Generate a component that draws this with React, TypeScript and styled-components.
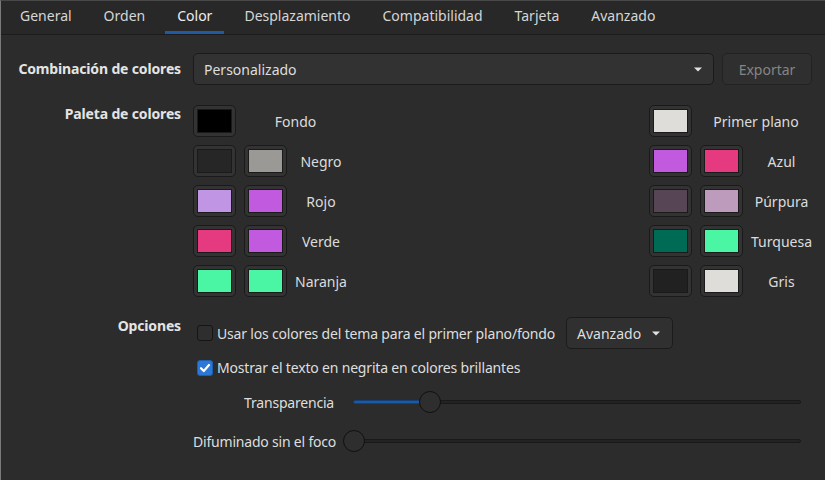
import React from "react";
import styled, { createGlobalStyle } from "styled-components";

const GlobalStyle = createGlobalStyle`
  html, body {
    margin: 0;
    padding: 0;
    background: #2c2c2c;
  }
  * {
    box-sizing: border-box;
  }
`;

const tabs = [
  "General",
  "Orden",
  "Color",
  "Desplazamiento",
  "Compatibilidad",
  "Tarjeta",
  "Avanzado",
];

interface IPaletteRow {
  name: string;
  colors: string[];
}

const leftPalette: IPaletteRow[] = [
  { name: "Fondo", colors: ["#000000"] },
  { name: "Negro", colors: ["#262626", "#9a9996"] },
  { name: "Rojo", colors: ["#c095e4", "#c25ae0"] },
  { name: "Verde", colors: ["#e53a80", "#c25ae0"] },
  { name: "Naranja", colors: ["#4af5a3", "#4af5a3"] },
];

const rightPalette: IPaletteRow[] = [
  { name: "Primer plano", colors: ["#deddda"] },
  { name: "Azul", colors: ["#c25ae0", "#e53a80"] },
  { name: "Púrpura", colors: ["#574556", "#bd9bbd"] },
  { name: "Turquesa", colors: ["#006b55", "#4af5a3"] },
  { name: "Gris", colors: ["#212121", "#deddda"] },
];

const ArrowDown = () => (
  <svg width="8" height="5" viewBox="0 0 8 5">
    <path d="M0 0.5 L8 0.5 L4 4.5 Z" fill="#e2e2e2" />
  </svg>
);

const CheckMark = () => (
  <svg width="12" height="12" viewBox="0 0 12 12">
    <path
      d="M2 6.2 L4.8 9 L10 3"
      fill="none"
      stroke="#ffffff"
      strokeWidth="2.2"
      strokeLinecap="round"
      strokeLinejoin="round"
    />
  </svg>
);

const Palette = ({ rows }: { rows: IPaletteRow[] }) => (
  <PaletteGroup>
    {rows.map((row) => (
      <React.Fragment key={row.name}>
        {row.colors.map((color, index) => (
          <SwatchButton key={index}>
            <SwatchColor style={{ background: color }} />
          </SwatchButton>
        ))}
        <SwatchName $wide={row.colors.length === 1}>{row.name}</SwatchName>
      </React.Fragment>
    ))}
  </PaletteGroup>
);

const Slider = ({ value }: { value: number }) => (
  <SliderBox>
    <Track>
      <TrackFill style={{ width: `${value * 100}%` }} />
      <Thumb style={{ left: `${value * 100}%` }} />
    </Track>
  </SliderBox>
);

const App = () => {
  return (
    <>
      <GlobalStyle />
      <Window>
        <TabBar>
          {tabs.map((tab) => (
            <Tab key={tab} $active={tab === "Color"}>
              {tab}
            </Tab>
          ))}
        </TabBar>
        <FormGrid>
          <RowLabel $center>Combinación de colores</RowLabel>
          <SchemeRow>
            <Combo>
              <span>Personalizado</span>
              <ArrowDown />
            </Combo>
            <Button disabled>Exportar</Button>
          </SchemeRow>

          <RowLabel>Paleta de colores</RowLabel>
          <PaletteRow>
            <Palette rows={leftPalette} />
            <Palette rows={rightPalette} />
          </PaletteRow>

          <RowLabel>Opciones</RowLabel>
          <Options>
            <OptionLine>
              <CheckItem>
                <CheckBox $checked={false} />
                Usar los colores del tema para el primer plano/fondo
              </CheckItem>
              <MenuButton>
                Avanzado
                <ArrowDown />
              </MenuButton>
            </OptionLine>
            <OptionLine>
              <CheckItem>
                <CheckBox $checked>
                  <CheckMark />
                </CheckBox>
                Mostrar el texto en negrita en colores brillantes
              </CheckItem>
            </OptionLine>
            <SliderGrid>
              <SliderLabel>Transparencia</SliderLabel>
              <Slider value={0.17} />
              <SliderLabel>Difuminado sin el foco</SliderLabel>
              <Slider value={0} />
            </SliderGrid>
          </Options>
        </FormGrid>
      </Window>
    </>
  );
};

const Window = styled.div`
  width: 825px;
  height: 480px;
  background: #2c2c2c;
  border-left: 1px solid #7a7a7a;
  border-top: 1px solid #484848;
  color: #dedede;
  font-family: "Noto Sans", "DejaVu Sans", sans-serif;
  font-size: 14px;
  overflow: hidden;
`;

const TabBar = styled.div`
  display: flex;
  gap: 8px;
  height: 34px;
  padding-left: 7px;
  background: #282828;
  border-bottom: 1px solid #1c1c1c;
`;

const Tab = styled.div<{ $active: boolean }>`
  display: flex;
  align-items: center;
  padding: 0 12px 1px;
  height: 100%;
  color: ${(p) => (p.$active ? "#eeeeee" : "#d6d6d6")};
  border-bottom: 3px solid ${(p) => (p.$active ? "#1f5aa2" : "transparent")};
`;

const FormGrid = styled.div`
  display: grid;
  grid-template-columns: 164px 1fr;
  column-gap: 12px;
  row-gap: 20px;
  padding: 18px 13px 0 16px;
`;

const RowLabel = styled.div<{ $center?: boolean }>`
  align-self: ${(p) => (p.$center ? "center" : "start")};
  text-align: right;
  white-space: nowrap;
  font-weight: 700;
  letter-spacing: -0.15px;
  line-height: 18px;
  color: #e4e4e4;
  direction: rtl;
  unicode-bidi: plaintext;
`;

const SchemeRow = styled.div`
  display: flex;
  gap: 8px;
`;

const Combo = styled.div`
  flex: 1;
  display: flex;
  align-items: center;
  justify-content: space-between;
  height: 32px;
  padding: 0 11px 0 10px;
  background: #323232;
  border: 1px solid #1b1b1b;
  border-radius: 5px;
`;

const Button = styled.button`
  width: 90px;
  height: 32px;
  font-family: inherit;
  font-size: 14px;
  color: #858585;
  background: #2f2f2f;
  border: 1px solid #222222;
  border-radius: 5px;
`;

const PaletteRow = styled.div`
  display: flex;
  justify-content: space-between;
`;

const PaletteGroup = styled.div`
  display: grid;
  grid-template-columns: 43px 43px max-content;
  grid-auto-rows: 32px;
  column-gap: 8px;
  row-gap: 8px;
`;

const SwatchButton = styled.div`
  width: 43px;
  height: 32px;
  padding: 3px;
  background: #333333;
  border: 1px solid #1a1a1a;
  border-radius: 5px;
`;

const SwatchColor = styled.div`
  width: 100%;
  height: 100%;
  border: 1px solid #1a1a1a;
`;

const SwatchName = styled.div<{ $wide: boolean }>`
  grid-column: ${(p) => (p.$wide ? "2 / span 2" : "auto")};
  display: flex;
  align-items: center;
  justify-content: center;
  color: #dcdcdc;
`;

const Options = styled.div`
  display: flex;
  flex-direction: column;
`;

const OptionLine = styled.div`
  display: flex;
  align-items: center;
  gap: 11px;
  margin-bottom: 9px;
  min-height: 18px;
`;

const CheckItem = styled.label`
  display: flex;
  align-items: center;
  gap: 4px;
  padding-left: 4px;
  letter-spacing: -0.18px;
  color: #dedede;
`;

const CheckBox = styled.span<{ $checked: boolean }>`
  display: inline-flex;
  align-items: center;
  justify-content: center;
  width: 16px;
  height: 16px;
  border-radius: 3px;
  background: ${(p) => (p.$checked ? "#2b78d6" : "#2e2e2e")};
  border: 1px solid ${(p) => (p.$checked ? "#1f5fb0" : "#151515")};
`;

const MenuButton = styled.div`
  display: flex;
  align-items: center;
  gap: 11px;
  height: 32px;
  padding: 0 12px 0 10px;
  background: #303030;
  border: 1px solid #1b1b1b;
  border-radius: 5px;
`;

const SliderGrid = styled.div`
  display: grid;
  grid-template-columns: 141px 1fr;
  column-gap: 8px;
  row-gap: 17px;
  align-items: center;
  margin-top: 5px;
`;

const SliderLabel = styled.div`
  text-align: right;
  white-space: nowrap;
  letter-spacing: -0.2px;
  color: #dedede;
`;

const SliderBox = styled.div`
  height: 22px;
  padding: 0 11px;
  display: flex;
  align-items: center;
`;

const Track = styled.div`
  position: relative;
  flex: 1;
  height: 4px;
  border-radius: 2px;
  background: #232323;
  border: 1px solid #191919;
`;

const TrackFill = styled.div`
  position: absolute;
  left: -1px;
  top: -1px;
  bottom: -1px;
  border-radius: 2px;
  background: #1c5aa6;
  border: 1px solid #153f75;
`;

const Thumb = styled.div`
  position: absolute;
  top: 50%;
  width: 22px;
  height: 22px;
  margin-left: -11px;
  margin-top: -11px;
  border-radius: 50%;
  background: #2e2e2e;
  border: 1px solid #111111;
`;

export default App;
